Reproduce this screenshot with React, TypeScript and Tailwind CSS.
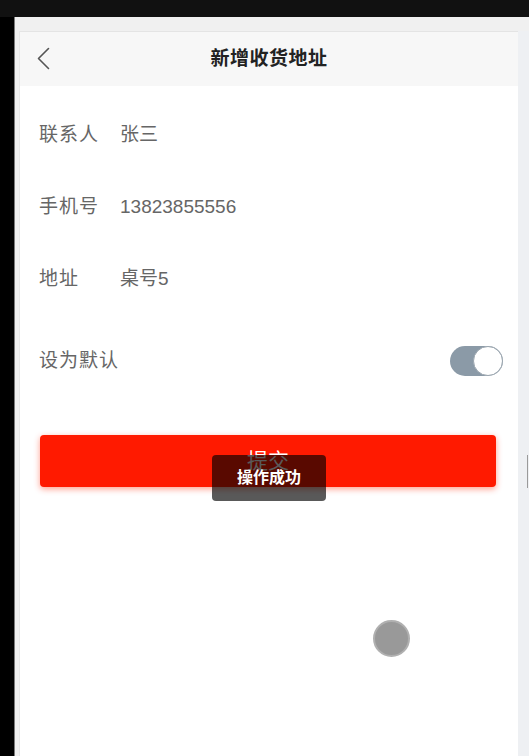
import React from "react";

const FONT = '"Liberation Sans", "Noto Sans CJK SC", sans-serif';

const FIELDS = [
  { label: "联系人", value: "张三" },
  { label: "手机号", value: "13823855556" },
  { label: "地址", value: "桌号5" },
];

function BackIcon() {
  return (
    <svg width="13" height="23" viewBox="0 0 13 23" fill="none">
      <polyline
        points="11.5,1.5 1.5,11.5 11.5,21.5"
        stroke="#555"
        strokeWidth="1.6"
        strokeLinecap="round"
        strokeLinejoin="round"
      />
    </svg>
  );
}

function Toggle() {
  return (
    <div className="relative w-[53px] h-[30px] rounded-full bg-[#8b9aa7]">
      <div className="absolute right-0 top-0 w-[30px] h-[30px] rounded-full bg-white border border-[#9aa5ae]" />
    </div>
  );
}

export default function App() {
  return (
    <div
      className="w-[529px] h-[756px] overflow-hidden bg-[#111111] flex flex-col"
      style={{ fontFamily: FONT }}
    >
      <div className="h-[17px] shrink-0 bg-[#111111]" />
      <div className="flex-1 flex min-h-0">
        <div className="w-[14px] bg-black" />
        <div className="w-px bg-[#7a7a7a]" />
        <div className="flex-1 flex flex-col bg-[#f0f0f0]">
          <div className="h-[14px] shrink-0" />
          <div className="flex-1 flex min-h-0">
            <div className="w-[4px]" />
            <div className="relative w-[499px] bg-white border-l border-[#e6e6e6] flex flex-col">
              <div className="relative h-[55px] shrink-0 bg-[#f7f7f7] border-t border-[#e4e4e4] flex items-center justify-center">
                <div className="absolute left-[17px] top-[15px]">
                  <BackIcon />
                </div>
                <span className="text-[19px] font-bold text-[#222] tracking-[0.5px]">新增收货地址</span>
              </div>

              <div className="pt-[13px]">
                {FIELDS.map((f) => (
                  <div key={f.label} className="h-[72px] flex items-center pl-[19px] text-[19px] text-[#666]">
                    <span className="w-[81px] tracking-[1px]">{f.label}</span>
                    <span>{f.value}</span>
                  </div>
                ))}
                <div className="mt-[10px] h-[72px] flex items-center justify-between pl-[19px] pr-[15px]">
                  <span className="text-[19px] text-[#666] tracking-[1px]">设为默认</span>
                  <Toggle />
                </div>
                <div className="mt-[38px] pl-[20px] pr-[22px]">
                  <button className="w-full h-[52px] rounded-[4px] bg-[#ff1a00] text-white text-[21px] shadow-[0_2px_6px_rgba(255,40,0,0.45)] flex items-center justify-center">
                    提交
                  </button>
                </div>
              </div>

              {/* toast */}
              <div className="absolute left-[192px] top-[424px] w-[114px] h-[46px] rounded-[4px] bg-black/65 flex items-center justify-center">
                <span className="text-[16px] font-bold text-white">操作成功</span>
              </div>

              {/* floating ball */}
              <div className="absolute left-[353px] top-[589px] w-[37px] h-[37px] rounded-full bg-[#999999] border-[2px] border-[#b0b0b0]" />
            </div>
            <div className="flex-1 bg-[#eef0f3] flex flex-col items-end pt-[424px]">
              <div className="w-px h-[33px] bg-[#9a9a9a] mr-[1px]" />
            </div>
          </div>
        </div>
      </div>
    </div>
  );
}
